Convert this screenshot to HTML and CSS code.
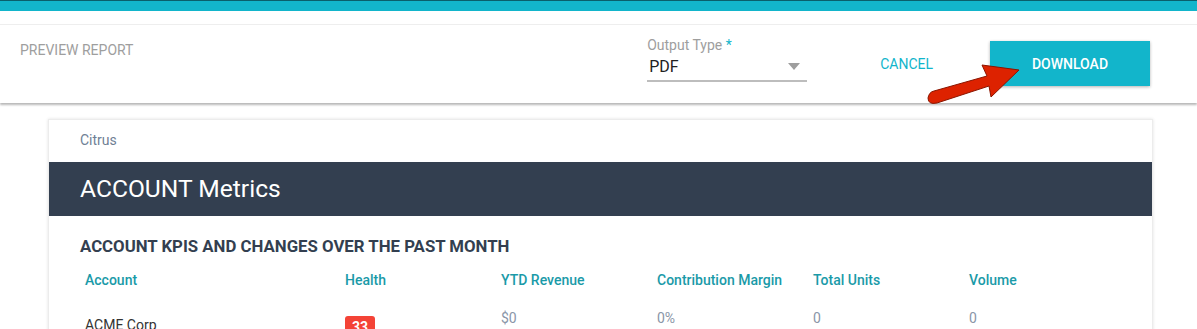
FILE: index.html
```html
<!DOCTYPE html>
<html>
<head>
    <title>Preview Report</title>
    <link rel="stylesheet" href="styles.css">
</head>
<body>
<div class="topbar"></div>
<div class="header">
    <div class="header-title">PREVIEW REPORT</div>
    <div class="field">
        <div class="field-label">Output Type <span class="req">*</span></div>
        <div class="field-select">
            <span>PDF</span>
            <span class="caret"></span>
        </div>
    </div>
    <a class="btn-cancel">CANCEL</a>
    <a class="btn-download">DOWNLOAD</a>
</div>

<div class="card">
    <div class="card-org">Citrus</div>
    <div class="card-banner">ACCOUNT Metrics</div>
    <h2 class="section-title">ACCOUNT KPIS AND CHANGES OVER THE PAST MONTH</h2>
    <div class="kpi-table">
        <div class="th">Account</div>
        <div class="th">Health</div>
        <div class="th">YTD Revenue</div>
        <div class="th">Contribution Margin</div>
        <div class="th">Total Units</div>
        <div class="th">Volume</div>

        <div class="td td-name">ACME Corp</div>
        <div class="td"><span class="badge">33</span></div>
        <div class="td">$0</div>
        <div class="td">0%</div>
        <div class="td">0</div>
        <div class="td">0</div>
    </div>
</div>

<!-- annotation arrow drawn over the page -->
<svg class="pointer" width="1197" height="329" viewBox="0 0 1197 329">
    <path d="M934 91 L987 76 L982 65 L1019 70 L991 97 L989 86 L937 103 Q928 105 928 98 Q929 92 934 91 Z"
          fill="#dd2200" stroke="#8a1500" stroke-width="1"/>
</svg>
</body>
</html>
```

FILE: styles.css
```css
body {
    margin: 0;
    font-family: Roboto, "Liberation Sans", sans-serif;
    background: #fff;
    overflow: hidden;
}

.topbar {
    height: 11px;
    background-color: #12b5cb;
    border-top: 1px solid #0a5f6b;
    box-sizing: border-box;
}

.header {
    margin-top: 13px;
    height: 78px;
    border-top: 1px solid #eeeeee;
    box-shadow: 0 2px 2px rgba(0, 0, 0, 0.28);
    display: flex;
    align-items: flex-start;
    padding-right: 47px;
    position: relative;
    z-index: 1;
    background: #fff;
}

.header-title {
    flex: 1;
    padding: 17px 0 0 20px;
    font-size: 14px;
    color: #9e9e9e;
}

.field {
    width: 160px;
    margin-top: 12px;
}

.field-label {
    font-size: 14px;
    color: #9e9e9e;
    line-height: 16px;
}

.req {
    color: #12b5cb;
}

.field-select {
    display: flex;
    justify-content: space-between;
    align-items: center;
    height: 27px;
    border-bottom: 2px solid #bdbdbd;
    font-size: 16px;
    color: #212121;
    padding-left: 2px;
}

.caret {
    width: 0;
    height: 0;
    border-left: 6px solid transparent;
    border-right: 6px solid transparent;
    border-top: 7px solid #9e9e9e;
    margin-right: 7px;
}

.btn-cancel {
    margin: 31px 57px 0 73px;
    font-size: 14px;
    color: #12b5cb;
}

.btn-download {
    margin-top: 16px;
    width: 160px;
    height: 45px;
    background-color: #12b5cb;
    color: #fff;
    font-size: 14px;
    font-weight: 500;
    display: flex;
    align-items: center;
    justify-content: center;
    box-shadow: 0 1px 3px rgba(0, 0, 0, 0.3);
}

.card {
    margin: 16px 0 0 48px;
    width: 1105px;
    height: 300px;
    border: 1px solid #ececec;
    box-shadow: 0 0 3px rgba(0, 0, 0, 0.12);
    box-sizing: border-box;
}

.card-org {
    padding: 12px 0 0 31px;
    height: 30px;
    font-size: 14px;
    color: #6f7f95;
}

.card-banner {
    background-color: #333f50;
    color: #fff;
    font-size: 24.6px;
    height: 54px;
    line-height: 54px;
    padding-left: 31px;
}

.section-title {
    margin: 20px 0 0 31px;
    font-size: 16.8px;
    font-weight: bold;
    color: #333f50;
}

.kpi-table {
    margin: 16px 0 0 31px;
    display: grid;
    grid-template-columns: 265px 156px 156px 156px 156px 1fr;
}

.th {
    font-size: 14px;
    font-weight: 500;
    color: #1a9aa8;
    height: 38px;
}

.th:first-child {
    padding-left: 5px;
}

.td {
    font-size: 14px;
    color: #8a96a8;
}

.td-name {
    padding: 7px 0 0 5px;
    color: #333;
}

.badge {
    display: inline-block;
    margin-top: 6px;
    background: #f44336;
    color: #fff;
    font-weight: bold;
    border-radius: 3px;
    width: 30px;
    height: 22px;
    line-height: 22px;
    text-align: center;
}

.pointer {
    position: absolute;
    left: 0;
    top: 0;
    z-index: 5;
    pointer-events: none;
}
```
